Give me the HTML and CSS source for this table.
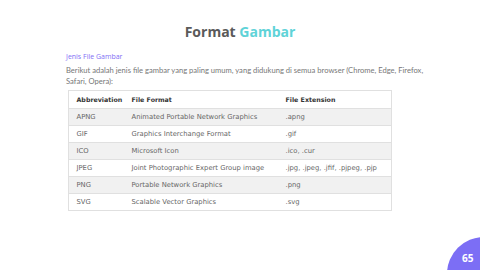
FILE: index.html
```html
<!DOCTYPE html>
<html>
<head>
<meta charset="utf-8">
<link rel="stylesheet" href="styles.css">
</head>
<body>
<div class="slide">
  <h1 class="title">Format <span class="accent">Gambar</span></h1>
  <div class="content">
    <div class="subtitle">Jenis File Gambar</div>
    <p class="intro">Berikut adalah jenis file gambar yang paling umum, yang didukung di semua browser (Chrome, Edge, Firefox, Safari, Opera):</p>
    <table class="formats">
      <thead>
        <tr><th class="c1">Abbreviation</th><th class="c2">File Format</th><th class="c3">File Extension</th></tr>
      </thead>
      <tbody>
        <tr><td>APNG</td><td>Animated Portable Network Graphics</td><td>.apng</td></tr>
        <tr><td>GIF</td><td>Graphics Interchange Format</td><td>.gif</td></tr>
        <tr><td>ICO</td><td>Microsoft Icon</td><td>.ico, .cur</td></tr>
        <tr><td>JPEG</td><td>Joint Photographic Expert Group image</td><td>.jpg, .jpeg, .jfif, .pjpeg, .pjp</td></tr>
        <tr><td>PNG</td><td>Portable Network Graphics</td><td>.png</td></tr>
        <tr><td>SVG</td><td>Scalable Vector Graphics</td><td>.svg</td></tr>
      </tbody>
    </table>
  </div>
  <div class="page-badge"><span class="page-num">65</span></div>
</div>
</body>
</html>
```

FILE: styles.css
```css
html, body {
  margin: 0;
  padding: 0;
  background: #ffffff;
}
.slide {
  position: relative;
  width: 480px;
  height: 270px;
  overflow: hidden;
  font-family: "Open Sans", "Noto Sans", sans-serif;
}
.title {
  margin: 0;
  padding-top: 22px;
  text-align: center;
  font-size: 14px;
  line-height: 20px;
  font-weight: 700;
  color: #5a5a5a;
}
.accent {
  color: #5fd3d8;
}
.content {
  padding: 0 0 0 66px;
  margin-top: 10px;
}
.subtitle {
  font-size: 7px;
  line-height: 10px;
  color: #7f6ff5;
}
.intro {
  margin: 3px 0 0 0;
  width: 372px;
  font-family: "Lato", "Open Sans", sans-serif;
  font-size: 7.6px;
  line-height: 11px;
  color: #777777;
}
.formats {
  margin-top: 3px;
  margin-left: 1.5px;
  width: 324px;
  table-layout: fixed;
  border-collapse: collapse;
  border: 1px solid #e0e0e0;
  font-family: "DejaVu Sans", Verdana, sans-serif;
  font-size: 6.8px;
  color: #666666;
}
.formats th, .formats td {
  text-align: left;
  padding: 5px 0 4px 8px;
  line-height: 7px;
  border-bottom: 1px solid #e0e0e0;
  white-space: nowrap;
}
.formats th {
  color: #333333;
  font-size: 6.3px;
  padding-top: 5px;
  padding-bottom: 5px;
}
.c1 { width: 47px; }
.c2 { width: 146px; }
.formats tbody tr:nth-child(odd) {
  background: #f1f1f1;
}
.page-badge {
  position: absolute;
  left: 447px;
  top: 237px;
  width: 74px;
  height: 74px;
  border-radius: 50%;
  background: #7c6ef5;
}
.page-num {
  position: absolute;
  left: 15px;
  top: 14px;
  font-size: 10px;
  font-weight: 700;
  color: #ffffff;
}
```
